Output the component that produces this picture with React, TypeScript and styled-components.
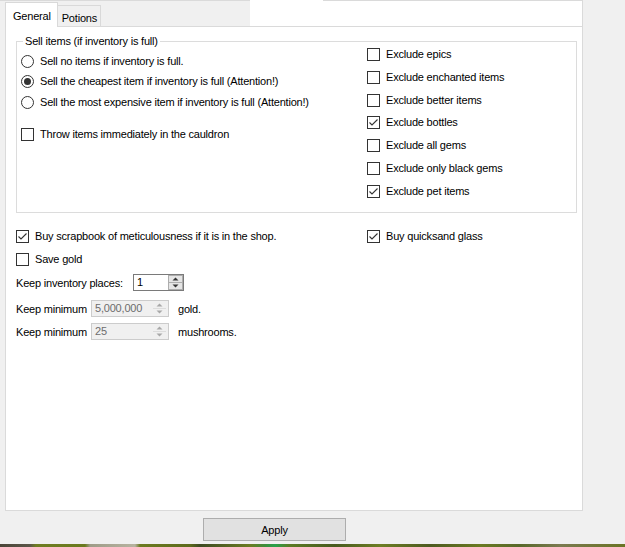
import React from 'react';
import styled, { createGlobalStyle } from 'styled-components';

const Global = createGlobalStyle`
  html, body { margin: 0; padding: 0; background: #f0f0f0; }
  body { font-family: "Liberation Sans", Arial, sans-serif; font-size: 11px; color: #000; }
  #root { width: 625px; height: 547px; overflow: hidden; }
`;

const Window = styled.div`
  width: 625px;
  height: 547px;
  display: flex;
  flex-direction: column;
  background: #f0f0f0;
  font-family: "Liberation Sans", Arial, sans-serif;
  font-size: 11px;
  letter-spacing: -0.2px;
  color: #000;
`;

const TabStrip = styled.div`
  height: 26px;
  display: flex;
  align-items: flex-end;
  padding: 0 42px 0 5px;
  background: linear-gradient(#dadada, #dadada) 0 0 / 250px 1px no-repeat, #f0f0f0;
`;

const Tab = styled.div<{ $active?: boolean }>`
  box-sizing: border-box;
  height: ${p => (p.$active ? '25px' : '21px')};
  margin-bottom: ${p => (p.$active ? '-1px' : '0')};
  position: relative;
  z-index: 1;
  padding: ${p => (p.$active ? '7px 6px 0 7px' : '6px 3px 0 4px')};
  background: ${p => (p.$active ? '#ffffff' : '#f0f0f0')};
  border: 1px solid #d9d9d9;
  border-bottom: none;
  ${p => (p.$active ? '' : 'border-left: none;')}
  line-height: 13px;
  white-space: nowrap;
`;

const BlankStrip = styled.div`
  margin-left: auto;
  width: 333px;
  height: 26px;
  box-sizing: border-box;
  background: linear-gradient(#dadada, #dadada) 73px 0 / 260px 1px no-repeat, #ffffff;
  border-right: 1px solid #dadada;
`;

const TabPage = styled.div`
  box-sizing: border-box;
  height: 485px;
  margin: 0 42px 0 5px;
  background: #ffffff;
  border: 1px solid #dadada;
  display: flex;
  flex-direction: column;
`;

const GroupBox = styled.fieldset`
  margin: 8px 5px 0 10px;
  padding: 0;
  min-width: 0;
  border: 1px solid #dcdcdc;
`;

const GroupLegend = styled.legend`
  margin-left: 6px;
  padding: 0 2px;
  line-height: 12px;
`;

const GroupGrid = styled.div`
  height: 165px;
  display: grid;
  grid-template-columns: 346px 1fr;
  padding-left: 4px;
`;

const LeftColumn = styled.div`
  display: flex;
  flex-direction: column;
  padding-top: 4px;
`;

const RightColumn = styled.div`
  display: flex;
  flex-direction: column;
  margin-top: -3.8px;
`;

const OptionRow = styled.label<{ $h: number; $mt?: number }>`
  display: flex;
  align-items: center;
  gap: 6px;
  height: ${p => p.$h}px;
  margin-top: ${p => p.$mt || 0}px;
  white-space: nowrap;
  line-height: 13px;
`;

const Box = styled.span`
  width: 13px;
  height: 13px;
  box-sizing: border-box;
  border: 1px solid #333333;
  background: #ffffff;
  flex: none;
  display: flex;
  align-items: center;
  justify-content: center;
`;

const RadioCircle = styled.span<{ $on?: boolean }>`
  width: 13px;
  height: 13px;
  box-sizing: border-box;
  border: 1px solid #333333;
  border-radius: 50%;
  background: #ffffff;
  flex: none;
  display: flex;
  align-items: center;
  justify-content: center;
  &::after {
    content: '';
    width: 7px;
    height: 7px;
    border-radius: 50%;
    background: ${p => (p.$on ? '#333333' : 'transparent')};
  }
`;

const Lower = styled.div`
  display: flex;
  margin: 12px 0 0 10px;
`;

const LowerLeft = styled.div`
  width: 351px;
  display: flex;
  flex-direction: column;
`;

const LowerRight = styled.div`
  display: flex;
  flex-direction: column;
`;

const SpinRow = styled.div<{ $mt?: number }>`
  display: flex;
  align-items: center;
  height: 23px;
  margin-top: ${p => p.$mt || 0}px;
  white-space: nowrap;
`;

const SpinLabel = styled.span<{ $w: number }>`
  width: ${p => p.$w}px;
  flex: none;
`;

const SpinField = styled.div<{ $w: number; $disabled?: boolean }>`
  width: ${p => p.$w}px;
  height: 17px;
  box-sizing: border-box;
  flex: none;
  display: flex;
  border: 1px solid ${p => (p.$disabled ? '#cccccc' : '#7a7a7a')};
  background: ${p => (p.$disabled ? '#f0f0f0' : '#ffffff')};
`;

const SpinValue = styled.span<{ $disabled?: boolean }>`
  flex: 1;
  padding-left: 3px;
  line-height: 15px;
  color: ${p => (p.$disabled ? '#6d6d6d' : '#000000')};
`;

const SpinButtons = styled.div<{ $disabled?: boolean }>`
  width: 15px;
  margin: ${p => (p.$disabled ? '0 1px 0 0' : '0')};
  display: flex;
  flex-direction: column;
  box-sizing: border-box;
  border: 1px solid ${p => (p.$disabled ? 'transparent' : '#adadad')};
  background: ${p => (p.$disabled ? '#f0f0f0' : '#e5e5e5')};
`;

const SpinHalf = styled.span<{ $disabled?: boolean; $top?: boolean }>`
  flex: 1;
  display: flex;
  align-items: center;
  justify-content: center;
  ${p => (p.$top ? `border-bottom: 1px solid ${p.$disabled ? '#dcdcdc' : '#adadad'};` : '')}
`;

const Suffix = styled.span`
  margin-left: 9px;
`;

const Footer = styled.div`
  height: 33px;
  box-sizing: border-box;
  padding: 7px 0 0 203px;
`;

const ApplyButton = styled.button`
  width: 143px;
  height: 23px;
  box-sizing: border-box;
  border: 1px solid #adadad;
  background: #e1e1e1;
  font-family: inherit;
  font-size: 11px;
  letter-spacing: -0.2px;
  color: #000;
  padding: 0;
`;

const GameStrip = styled.div`
  height: 3px;
  background: linear-gradient(
    90deg,
    #4a4538 0px,
    #5b5648 30px,
    #6f7d22 36px,
    #6a7a1e 85px,
    #9e9c88 90px,
    #b7b3a0 135px,
    #6c7b20 140px,
    #5d6b1c 190px,
    #3d4a22 200px,
    #6b7c22 250px,
    #3e8d3a 265px,
    #27a14a 275px,
    #5c7b24 290px,
    #485a1e 335px,
    #6d7e24 380px,
    #4d5a20 430px,
    #6a7a22 480px,
    #58682a 520px,
    #7b7a50 560px,
    #6a7424 625px
  );
`;

const Check = () => (
  <svg width="11" height="11" viewBox="0 0 11 11">
    <polyline points="1.5,5.5 4,8 9.5,2.5" fill="none" stroke="#333333" strokeWidth="1.1" />
  </svg>
);

const CheckBox: React.FC<{ checked?: boolean }> = ({ checked }) => <Box>{checked && <Check />}</Box>;

const Arrow: React.FC<{ up?: boolean; color: string }> = ({ up, color }) => (
  <svg width="7" height="4" viewBox="0 0 7 4">
    <polygon points={up ? '0.5,3.5 6.5,3.5 3.5,0.5' : '0.5,0.5 6.5,0.5 3.5,3.5'} fill={color} />
  </svg>
);

const Spin: React.FC<{ value: string; w: number; disabled?: boolean }> = ({ value, w, disabled }) => {
  const c = disabled ? '#a8a8a8' : '#333333';
  return (
    <SpinField $w={w} $disabled={disabled}>
      <SpinValue $disabled={disabled}>{value}</SpinValue>
      <SpinButtons $disabled={disabled}>
        <SpinHalf $top $disabled={disabled}>
          <Arrow up color={c} />
        </SpinHalf>
        <SpinHalf $disabled={disabled}>
          <Arrow color={c} />
        </SpinHalf>
      </SpinButtons>
    </SpinField>
  );
};

const excludes: [string, boolean][] = [
  ['Exclude epics', false],
  ['Exclude enchanted items', false],
  ['Exclude better items', false],
  ['Exclude bottles', true],
  ['Exclude all gems', false],
  ['Exclude only black gems', false],
  ['Exclude pet items', true],
];

const radios: [string, boolean][] = [
  ['Sell no items if inventory is full.', false],
  ['Sell the cheapest item if inventory is full (Attention!)', true],
  ['Sell the most expensive item if inventory is full (Attention!)', false],
];

export default function App() {
  return (
    <Window>
      <Global />
      <TabStrip>
        <Tab $active>General</Tab>
        <Tab>Potions</Tab>
        <BlankStrip />
      </TabStrip>
      <TabPage>
        <GroupBox>
          <GroupLegend>Sell items (if inventory is full)</GroupLegend>
          <GroupGrid>
            <LeftColumn>
              {radios.map(([t, on]) => (
                <OptionRow key={t} $h={20.5}>
                  <RadioCircle $on={on} />
                  {t}
                </OptionRow>
              ))}
              <OptionRow $h={20} $mt={11.5}>
                <CheckBox />
                Throw items immediately in the cauldron
              </OptionRow>
            </LeftColumn>
            <RightColumn>
              {excludes.map(([t, on]) => (
                <OptionRow key={t} $h={22.8}>
                  <CheckBox checked={on} />
                  {t}
                </OptionRow>
              ))}
            </RightColumn>
          </GroupGrid>
        </GroupBox>
        <Lower>
          <LowerLeft>
            <OptionRow $h={23}>
              <CheckBox checked />
              Buy scrapbook of meticulousness if it is in the shop.
            </OptionRow>
            <OptionRow $h={23}>
              <CheckBox />
              Save gold
            </OptionRow>
            <SpinRow>
              <SpinLabel $w={117}>Keep inventory places:</SpinLabel>
              <Spin value="1" w={51} />
            </SpinRow>
            <SpinRow $mt={3}>
              <SpinLabel $w={75}>Keep minimum</SpinLabel>
              <Spin value="5,000,000" w={78} disabled />
              <Suffix>gold.</Suffix>
            </SpinRow>
            <SpinRow>
              <SpinLabel $w={75}>Keep minimum</SpinLabel>
              <Spin value="25" w={78} disabled />
              <Suffix>mushrooms.</Suffix>
            </SpinRow>
          </LowerLeft>
          <LowerRight>
            <OptionRow $h={23}>
              <CheckBox checked />
              Buy quicksand glass
            </OptionRow>
          </LowerRight>
        </Lower>
      </TabPage>
      <Footer>
        <ApplyButton>Apply</ApplyButton>
      </Footer>
      <GameStrip />
    </Window>
  );
}
